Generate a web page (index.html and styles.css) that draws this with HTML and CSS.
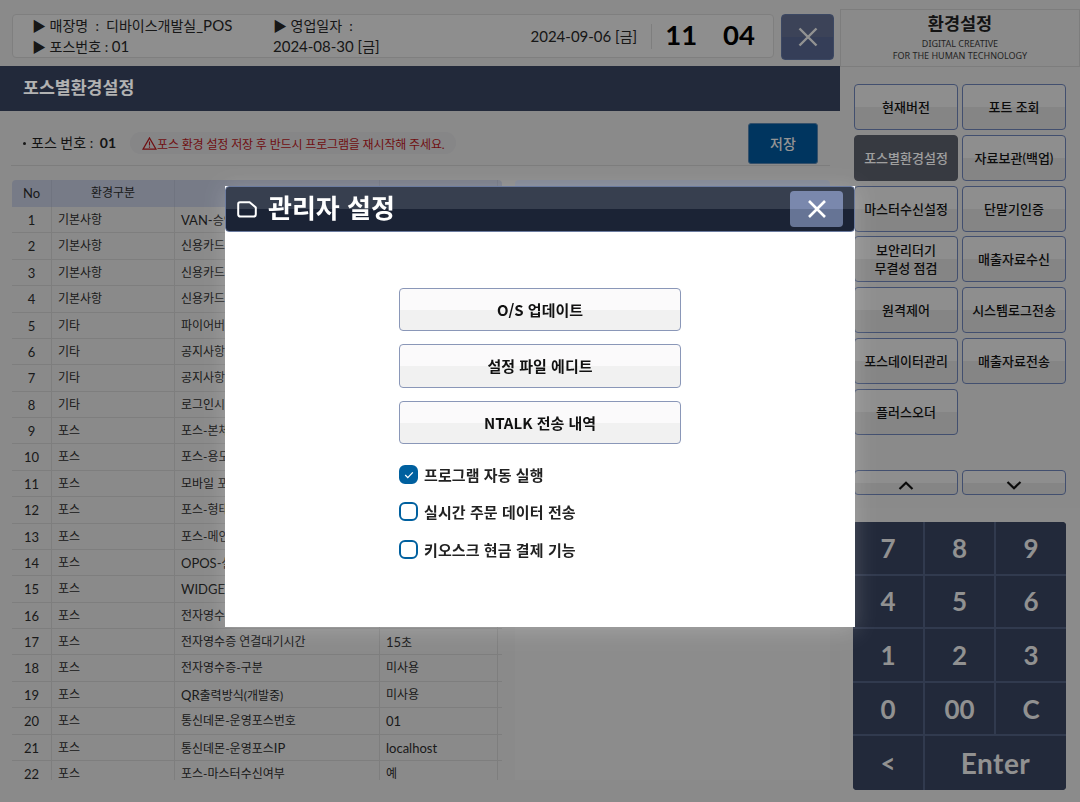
FILE: index.html
```html
<!DOCTYPE html>
<html lang="ko">
<head>
<meta charset="utf-8">
<title>포스별환경설정</title>
<link rel="stylesheet" href="styles.css">
</head>
<body>
<div class="app">
  <main class="main">
    <header class="topbar">
      <div class="info">
        <div class="info-a">
          <div>▶ 매장명 &nbsp;: &nbsp;디바이스개발실<span class="lat">_POS</span></div>
          <div>▶ 포스번호 : <span class="lat">01</span></div>
        </div>
        <div class="info-b">
          <div>▶ 영업일자 &nbsp;:</div>
          <div><span class="lat">2024-08-30 [</span>금<span class="lat">]</span></div>
        </div>
        <div class="clock">
          <span class="today"><span class="lat">2024-09-06 [</span>금<span class="lat">]</span></span>
          <span class="time"><b>11</b><b>04</b></span>
        </div>
      </div>
      <button class="top-close" aria-label="닫기">
        <svg width="20" height="20" viewBox="0 0 20 20"><path d="M1.5 1.5 18.5 18.5M18.5 1.5 1.5 18.5" fill="none" stroke="currentColor" stroke-width="2.4"/></svg>
      </button>
    </header>
    <h1 class="page-title">포스별환경설정</h1>
    <div class="toolbar">
      <span class="pos-no"><i class="dot"></i>포스 번호 : <b>01</b></span>
      <span class="warn">
        <svg width="15" height="13" viewBox="0 0 15 13"><path d="M7.5 1 14 12.2H1Z" fill="none" stroke="currentColor" stroke-width="1.3"/><path d="M7.5 4.6v4M7.5 9.6v1.2" stroke="currentColor" stroke-width="1.1"/></svg>포스 환경 설정 저장 후 반드시 프로그램을 재시작해 주세요.
      </span>
      <button class="save">저장</button>
    </div>
    <div class="content">
      <div class="table">
        <div class="row head"><span class="c lat">No</span><span class="c">환경구분</span><span></span><span></span><span></span></div>
        <div class="row"><span class="c">1</span><span>기본사항</span><span><span class="lat">VAN-</span>승인</span><span></span><span></span></div>
        <div class="row"><span class="c">2</span><span>기본사항</span><span>신용카드</span><span></span><span></span></div>
        <div class="row"><span class="c">3</span><span>기본사항</span><span>신용카드</span><span></span><span></span></div>
        <div class="row"><span class="c">4</span><span>기본사항</span><span>신용카드</span><span></span><span></span></div>
        <div class="row"><span class="c">5</span><span>기타</span><span>파이어버</span><span></span><span></span></div>
        <div class="row"><span class="c">6</span><span>기타</span><span>공지사항</span><span></span><span></span></div>
        <div class="row"><span class="c">7</span><span>기타</span><span>공지사항</span><span></span><span></span></div>
        <div class="row"><span class="c">8</span><span>기타</span><span>로그인시</span><span></span><span></span></div>
        <div class="row"><span class="c">9</span><span>포스</span><span>포스-본체</span><span></span><span></span></div>
        <div class="row"><span class="c">10</span><span>포스</span><span>포스-용도</span><span></span><span></span></div>
        <div class="row"><span class="c">11</span><span>포스</span><span>모바일 포</span><span></span><span></span></div>
        <div class="row"><span class="c">12</span><span>포스</span><span>포스-형태</span><span></span><span></span></div>
        <div class="row"><span class="c">13</span><span>포스</span><span>포스-메인</span><span></span><span></span></div>
        <div class="row"><span class="c">14</span><span>포스</span><span><span class="lat">OPOS-</span>설</span><span></span><span></span></div>
        <div class="row"><span class="c">15</span><span>포스</span><span><span class="lat">WIDGET</span></span><span></span><span></span></div>
        <div class="row"><span class="c">16</span><span>포스</span><span>전자영수</span><span></span><span></span></div>
        <div class="row"><span class="c">17</span><span>포스</span><span>전자영수증 연결대기시간</span><span><span class="lat">15</span>초</span><span></span></div>
        <div class="row"><span class="c">18</span><span>포스</span><span>전자영수증-구분</span><span>미사용</span><span></span></div>
        <div class="row"><span class="c">19</span><span>포스</span><span><span class="lat">QR</span>출력방식(개발중)</span><span>미사용</span><span></span></div>
        <div class="row"><span class="c">20</span><span>포스</span><span>통신데몬-운영포스번호</span><span class="lat">01</span><span></span></div>
        <div class="row"><span class="c">21</span><span>포스</span><span>통신데몬-운영포스<span class="lat">IP</span></span><span class="lat">localhost</span><span></span></div>
        <div class="row"><span class="c">22</span><span>포스</span><span>포스-마스터수신여부</span><span>예</span><span></span></div>
      </div>
      <div class="detail"></div>
    </div>
  </main>
  <aside class="side">
    <div class="side-head">
      <strong>환경설정</strong>
      <small>DIGITAL CREATIVE<br>FOR THE HUMAN TECHNOLOGY</small>
    </div>
    <div class="menu">
      <button>현재버전</button>
      <button>포트 조회</button>
      <button class="active">포스별환경설정</button>
      <button>자료보관(백업)</button>
      <button>마스터수신설정</button>
      <button>단말기인증</button>
      <button>보안리더기<br>무결성 점검</button>
      <button>매출자료수신</button>
      <button>원격제어</button>
      <button>시스템로그전송</button>
      <button>포스데이터관리</button>
      <button>매출자료전송</button>
      <button>플러스오더</button>
    </div>
    <div class="pager">
      <button aria-label="위로"><svg width="16" height="9" viewBox="0 0 16 9"><path d="M1.5 8 8 1.8 14.5 8" fill="none" stroke="currentColor" stroke-width="2.2"/></svg></button>
      <button aria-label="아래로"><svg width="16" height="9" viewBox="0 0 16 9"><path d="M1.5 1 8 7.2 14.5 1" fill="none" stroke="currentColor" stroke-width="2.2"/></svg></button>
    </div>
    <div class="pad-wrap">
      <div class="pad">
        <button>7</button><button>8</button><button>9</button>
        <button>4</button><button>5</button><button>6</button>
        <button>1</button><button>2</button><button>3</button>
        <button>0</button><button>00</button><button>C</button>
        <button>&lt;</button><button class="enter">Enter</button>
      </div>
    </div>
  </aside>
</div>
<div class="overlay">
  <section class="modal">
    <div class="modal-head">
      <svg class="doc" width="20" height="17" viewBox="0 0 20 17"><path d="M3 1.2H12.6L18.8 6.4V13.2A2.4 2.4 0 0 1 16.4 15.6H3.6A2.4 2.4 0 0 1 1.2 13.2V3A1.8 1.8 0 0 1 3 1.2Z" fill="none" stroke="currentColor" stroke-width="2"/></svg>
      <h2>관리자 설정</h2>
      <button class="modal-close" aria-label="닫기">
        <svg width="20" height="20" viewBox="0 0 20 20"><path d="M2 2 18 18M18 2 2 18" fill="none" stroke="currentColor" stroke-width="2.6"/></svg>
      </button>
    </div>
    <div class="modal-body">
      <button class="big">O/S 업데이트</button>
      <button class="big">설정 파일 에디트</button>
      <button class="big">NTALK 전송 내역</button>
      <div class="checks">
        <label class="check"><span class="box on"><svg width="10" height="8" viewBox="0 0 10 8"><path d="M1.2 4 3.8 6.6 8.8 1.4" fill="none" stroke="currentColor" stroke-width="1.3"/></svg></span>프로그램 자동 실행</label>
        <label class="check"><span class="box"></span>실시간 주문 데이터 전송</label>
        <label class="check"><span class="box"></span>키오스크 현금 결제 기능</label>
      </div>
    </div>
  </section>
</div>
</body>
</html>
```
FILE: styles.css
```css
* { box-sizing: border-box; }
html, body { margin: 0; height: 100%; overflow: hidden; }
body {
  background: #c6c6c6;
  color: #1c1c1c;
  font-family: Lato, "Noto Sans CJK KR", sans-serif;
  font-size: 13px;
}
button { font: inherit; color: inherit; padding: 0; cursor: pointer; }

.app { display: flex; height: 802px; }
.main { width: 840px; display: flex; flex-direction: column; }

.topbar { display: flex; height: 66px; padding: 14px 6px 6px 12px; gap: 7px; }
.info {
  flex: 1;
  display: flex;
  align-items: center;
  height: 44px;
  padding: 0 18px 0 19px;
  background: #cccccc;
  border: 1px solid #b7b7b7;
  border-radius: 4px;
  font-size: 14px;
  line-height: 20px;
  color: #222;
}
.info .lat { font-size: 15px; }
.info-a { width: 241px; }
.info-b { width: 200px; }
.clock { margin-left: auto; display: flex; align-items: center; }
.today { padding-right: 14px; border-right: 1px solid #b5b5b5; line-height: 24px; }
.time { display: flex; gap: 26px; margin: -2px 0 0 13px; font-size: 27.5px; color: #000; line-height: 30px; }
.time b { font-weight: 700; }
.top-close {
  width: 53px;
  height: 46px;
  border: 1px solid #56688f;
  border-radius: 4px;
  background: linear-gradient(#57617f 50%, #4d5a7e 50%);
  color: #d2d2d2;
  display: flex;
  align-items: center;
  justify-content: center;
}

.page-title {
  margin: 0;
  height: 45px;
  padding-left: 23px;
  background: #323c54;
  color: #fff;
  font-size: 17.3px;
  font-weight: 700;
  line-height: 44px;
}

.toolbar {
  display: flex;
  align-items: center;
  height: 55px;
  margin: 0 10px 0 11px;
  padding: 12px 12px 2px 11px;
  border-bottom: 1px solid #b4b4b4;
}
.pos-no { font-size: 14px; line-height: 20px; }
.pos-no b { margin-left: 3px; font-weight: 700; }
.dot {
  display: inline-block;
  width: 3px;
  height: 3px;
  margin: 0 5px 3px 1px;
  border-radius: 50%;
  background: #222;
}
.warn {
  display: flex;
  align-items: center;
  height: 22px;
  margin-left: 14px;
  padding: 0 12px;
  background: #c0c0c2;
  border-radius: 11px;
  color: #a01518;
  font-size: 12px;
  letter-spacing: -.15px;
}
.save {
  margin-left: auto;
  width: 70px;
  height: 41px;
  border: 1px solid #4c7399;
  border-radius: 3px;
  background: #004d88;
  color: #d4d4d4;
  font-size: 14px;
  font-weight: 500;
}

.content { display: flex; padding: 14px 10px 0 12px; gap: 13px; }
.table { width: 490px; height: 600px; overflow: hidden; }
.row {
  display: grid;
  grid-template-columns: 40px 123px 205px 118px 4px;
  height: 26.375px;
  border-bottom: 1px solid #b5b5b5;
  font-size: 12px;
  line-height: 26px;
  color: #262626;
}
.row .lat, .row .c { font-size: 13px; }
.row > span {
  padding-left: 6px;
  border-right: 1px solid #b5b5b5;
  white-space: nowrap;
  overflow: hidden;
}
.row > span:last-child { border-right: 0; padding: 0; }
.row > .c { padding: 0; text-align: center; }
.head { background: #abb1c2; height: 27px; border-radius: 4px 4px 0 0; border-bottom: 0; }
.head > span { border-right-color: #a1a7b8; }
.head > .c { font-size: 12px; }
.head > .lat { font-size: 13px; }
.detail { width: 315px; height: 600px; background: #c9c9c9; border-radius: 4px 4px 0 0; border-top: 6px solid #b8c0d4; }

.side { width: 240px; display: flex; flex-direction: column; }
.side-head {
  height: 58px;
  margin-top: 9px;
  border: 1px solid #b4b4b4;
  text-align: center;
  display: flex;
  flex-direction: column;
  align-items: center;
}
.side-head strong { font-size: 17.5px; font-weight: 700; line-height: 26px; margin-top: 1px; }
.side-head small { font-size: 9px; line-height: 12px; color: #333; margin-top: 1px; font-family: "Noto Sans", sans-serif; }

.menu {
  display: grid;
  grid-template-columns: 104px 104px;
  grid-auto-rows: 46px;
  column-gap: 4px;
  row-gap: 4.83px;
  padding: 17px 14px 0;
  height: 403px;
}
.menu button, .pager button {
  border: 1px solid #5f729f;
  border-radius: 4px;
  background: linear-gradient(#cccccc 50%, #bfbfbf 50%);
  color: #111;
  font-size: 13px;
  font-weight: 500;
  line-height: 18px;
}
.menu .active { background: #50535e; border-color: #50535e; color: #e4e4e4; }
.pager { display: grid; grid-template-columns: 104px 104px; gap: 4px; padding: 0 14px; height: 25px; }
.pager button { display: flex; align-items: flex-end; justify-content: center; padding-bottom: 4px; }

.pad-wrap { flex: 1; margin-top: 13px; padding: 14px 14px 0 13px; background: #c7c7c7; }
.pad {
  display: grid;
  grid-template-columns: 72px 71px 70px;
  grid-auto-rows: 53.6px;
  width: 213px;
  background: #323c54;
  border-radius: 4px;
  overflow: hidden;
}
.pad button {
  border: 0;
  border-right: 2px solid #475370;
  border-bottom: 2px solid #475370;
  background: #323c54;
  color: #d0d0d0;
  font-size: 26px;
  font-weight: 700;
}
.pad button:nth-child(3n), .pad .enter { border-right: 0; }
.pad button:nth-last-child(-n+2) { border-bottom: 0; }
.pad .enter { grid-column: span 2; font-size: 28px; letter-spacing: .5px; }

.overlay {
  position: fixed;
  inset: 0;
  background: rgba(0, 0, 0, .3);
}
.modal {
  position: absolute;
  left: 225px;
  top: 186px;
  width: 630px;
  height: 441px;
  background: #fff;
  box-shadow: 0 3px 20px rgba(255, 255, 255, .2);
  font-family: "Noto Sans CJK KR", sans-serif;
}
.modal-head {
  display: flex;
  align-items: center;
  height: 46px;
  padding: 0 11px;
  border: 1px solid #6b7b9f;
  border-radius: 4px;
  background: linear-gradient(#373f4f 50%, #1b2335 50%);
  color: #fff;
}
.modal-head h2 { margin: -4px 0 0 11px; font-size: 26px; font-weight: 700; line-height: 40px; }
.doc { flex: none; margin-top: 1px; }
.modal-close {
  margin-left: auto;
  width: 53px;
  height: 36px;
  border: 0;
  border-radius: 4px;
  background: linear-gradient(#7a88ad 50%, #667495 50%);
  color: #fff;
  display: flex;
  align-items: center;
  justify-content: center;
}
.modal-body { display: flex; flex-direction: column; padding: 55.6px 174px 0; gap: 13px; }
.big {
  height: 43.6px;
  border: 1px solid #8a97b8;
  border-radius: 4px;
  background: linear-gradient(#fbfafb 50%, #f1f1f1 50%);
  color: #111;
  font-size: 15px;
  font-weight: 700;
}
.checks { display: flex; flex-direction: column; gap: 15.2px; margin-top: 6.4px; }
.check { display: flex; align-items: center; gap: 6px; height: 22px; font-size: 15px; letter-spacing: .08px; font-weight: 700; color: #222; }
.box {
  width: 19px;
  height: 19px;
  border: 2.5px solid #00609f;
  border-radius: 6px;
  display: flex;
  align-items: center;
  justify-content: center;
  color: #fff;
}
.box.on { background: #00609f; }
```
